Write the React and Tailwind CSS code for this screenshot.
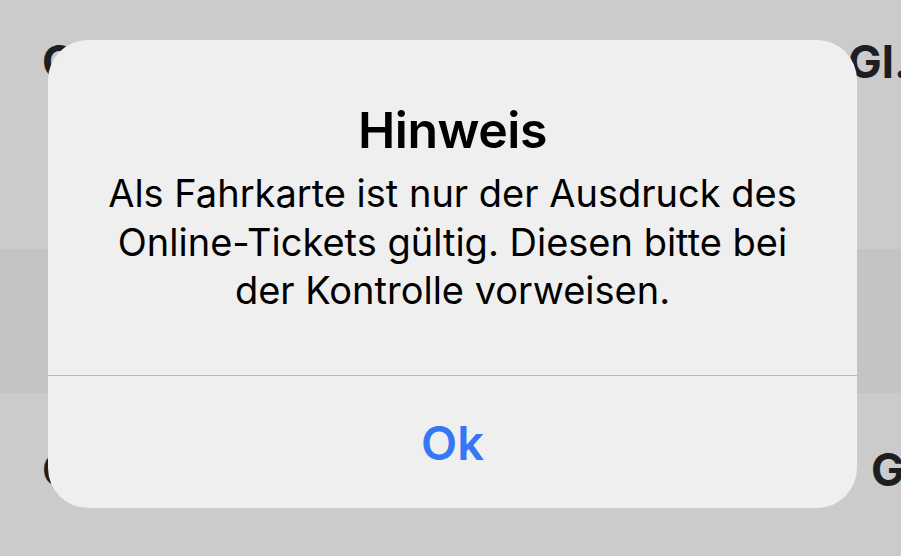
export default function App() {
  return (
    <div
      className="relative w-[901px] h-[556px] overflow-hidden bg-[#cbcbcb]"
      style={{ fontFamily: 'Inter, "Noto Sans", sans-serif' }}
    >
      {/* background list behind the alert */}
      <div className="flex flex-col h-full">
        <div className="h-[249px] flex items-start pt-[38px] overflow-hidden">
          <div className="w-[848px] shrink-0 pl-[42px] text-[45px] font-bold text-[#1c1e22] leading-[48px] whitespace-nowrap">
            Gesamt
          </div>
          <div className="shrink-0 text-[45px] font-bold text-[#1c1e22] leading-[48px] whitespace-nowrap">
            Gl. 3
          </div>
        </div>
        <div className="h-[144px] bg-[#c3c4c6]" />
        <div className="flex-1 flex items-start pt-[53px] overflow-hidden">
          <div className="w-[871px] shrink-0 pl-[42px] text-[45px] font-bold text-[#1c1e22] leading-[48px] whitespace-nowrap">
            Gesamt
          </div>
          <div className="shrink-0 text-[45px] font-bold text-[#1c1e22] leading-[48px] whitespace-nowrap">
            Gl. 5
          </div>
        </div>
      </div>

      {/* alert */}
      <div className="absolute left-[48px] top-[40px] w-[809px] h-[468px] rounded-[40px] bg-[#efefef] flex flex-col">
        <div className="h-[335px] flex flex-col items-center pt-[60px]">
          <div className="text-[50px] leading-[60px] font-semibold text-black tracking-[-0.5px]">
            Hinweis
          </div>
          <div className="mt-[9px] text-[38px] leading-[48.5px] text-black text-center">
            Als Fahrkarte ist nur der Ausdruck des
            <br />
            Online-Tickets gültig. Diesen bitte bei
            <br />
            der Kontrolle vorweisen.
          </div>
        </div>
        <div className="h-px bg-[#b7b7b9]" />
        <div className="flex-1 flex items-center justify-center">
          <span className="text-[47px] font-semibold text-[#3478f6] leading-none">Ok</span>
        </div>
      </div>
    </div>
  );
}
